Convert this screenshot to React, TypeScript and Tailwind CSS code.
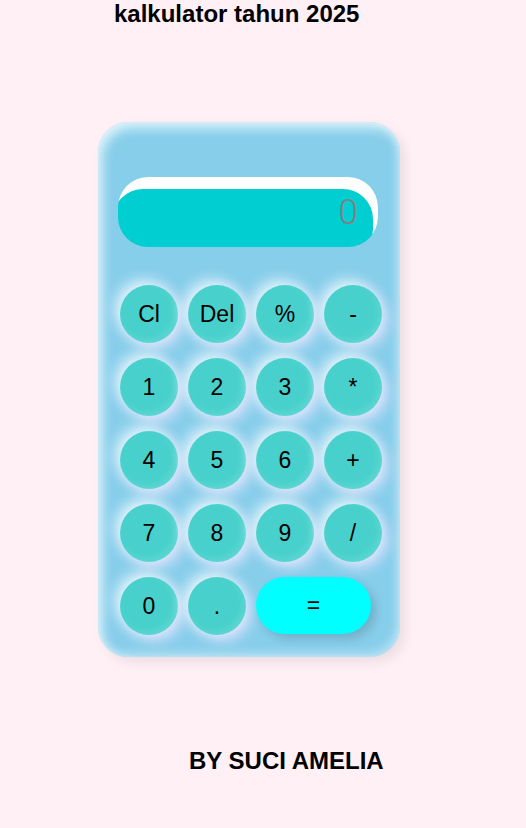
import React from "react";

const rows: string[][] = [
  ["Cl", "Del", "%", "-"],
  ["1", "2", "3", "*"],
  ["4", "5", "6", "+"],
  ["7", "8", "9", "/"],
];

function Btn({ label }: { label: string }) {
  return (
    <div className="w-[58px] h-[58px] rounded-full bg-[#48d1cc] flex items-center justify-center text-[23px] text-black shadow-[-5px_-5px_14px_rgba(255,255,255,0.75),5px_5px_14px_rgba(235,230,255,0.9),inset_-3px_-3px_6px_rgba(255,255,255,0.12)]">
      {label}
    </div>
  );
}

export default function App() {
  return (
    <div className="min-h-[828px] w-[526px] bg-[#fff0f5] font-['Liberation_Sans',Arial,sans-serif] flex flex-col">
      <h1 className="ml-[114px] mt-0 text-[24px] leading-[28px] font-bold text-black">
        kalkulator tahun 2025
      </h1>
      <div className="ml-[98px] mt-[94px] w-[302px] h-[535px] rounded-[30px] bg-[#87ceeb] pt-[55px] pl-[20px] shadow-[5px_5px_12px_rgba(0,0,0,0.08),inset_4px_6px_12px_rgba(255,255,255,0.75),inset_-3px_-4px_10px_rgba(255,255,255,0.4)]">
        <div className="w-[260px] h-[70px] rounded-[30px] bg-[#00ced1] shadow-[inset_-5px_12px_0_white] flex items-center justify-end pr-[20px]">
          <span className="text-[35px] font-light text-[#808080] leading-none font-['Roboto',sans-serif]">0</span>
        </div>
        <div className="mt-[38px] ml-[2px] flex flex-col gap-[15px]">
          {rows.map((r, i) => (
            <div key={i} className="flex gap-[10px]">
              {r.map((l) => (
                <Btn key={l} label={l} />
              ))}
            </div>
          ))}
          <div className="flex gap-[10px]">
            <Btn label="0" />
            <Btn label="." />
            <div className="w-[115px] h-[57px] rounded-[30px] bg-[#00ffff] flex items-center justify-center text-[23px] text-black shadow-[5px_5px_10px_rgba(0,0,0,0.15)]">
              =
            </div>
          </div>
        </div>
      </div>
      <div className="ml-[189px] mt-[90px] text-[24px] leading-[28px] font-bold text-black">
        BY SUCI AMELIA
      </div>
    </div>
  );
}
